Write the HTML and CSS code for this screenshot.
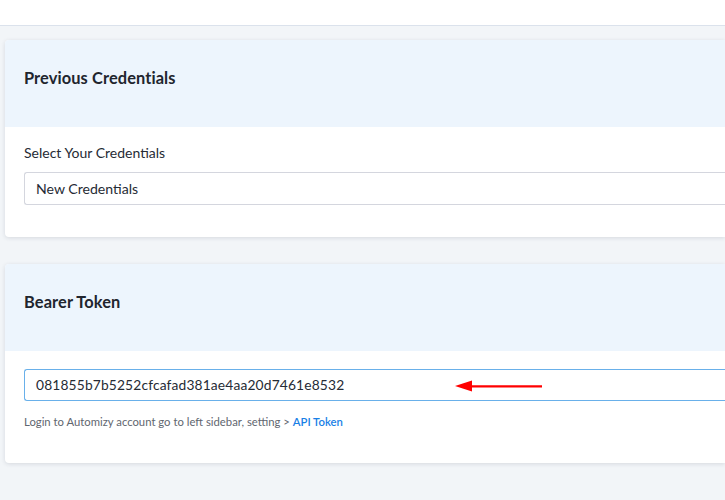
FILE: index.html
```html
<!DOCTYPE html>
<html>
<head>
<meta charset="utf-8">
<link rel="stylesheet" href="styles.css">
</head>
<body>
<div class="topbar"></div>
<main class="content">
  <section class="card">
    <div class="card-head"><h2>Previous Credentials</h2></div>
    <div class="card-body">
      <label class="label">Select Your Credentials</label>
      <div class="input">New Credentials</div>
    </div>
  </section>
  <section class="card card-token">
    <div class="card-head"><h2>Bearer Token</h2></div>
    <div class="card-body">
      <div class="input input-focus">081855b7b5252cfcafad381ae4aa20d7461e8532
        <svg class="arrow" width="90" height="14" viewBox="0 0 90 14"><path d="M16 6.2 L87 6.2 L87 8.6 L16 8.6 Z" fill="#f00"/><path d="M0 7 L17 1.5 L17 12.5 Z" fill="#f00"/></svg>
      </div>
      <p class="help">Login to Automizy account go to left sidebar, setting &gt; <a href="#">API Token</a></p>
    </div>
  </section>
</main>
</body>
</html>
```

FILE: styles.css
```css
* { box-sizing: border-box; }
html, body { margin: 0; padding: 0; }
body {
  width: 725px;
  height: 500px;
  overflow: hidden;
  background: #f2f5f8;
  font-family: Lato, "Open Sans", sans-serif;
  color: #1f2430;
}
.topbar {
  height: 26px;
  background: #fff;
  border-bottom: 1px solid #dbe2ec;
}
.content {
  padding: 14px 0 0 5px;
  display: flex;
  flex-direction: column;
  gap: 27px;
}
.card {
  background: #fff;
  border-radius: 4px 0 0 4px;
  box-shadow: 0 1px 4px rgba(40, 50, 70, 0.14);
  overflow: hidden;
}
.card-head {
  background: #edf5fd;
  height: 87px;
  display: flex;
  align-items: center;
  padding: 0 19px;
}
.card-head h2 {
  margin: 0 0 13px;
  font-size: 16.4px;
  font-weight: 700;
  letter-spacing: 0.1px;
  color: #21252e;
}
.card-body {
  padding: 17px 0 32px 19px;
}
.label {
  display: block;
  font-size: 14px;
  line-height: 18px;
  color: #262b35;
  margin-bottom: 10px;
}
.input {
  position: relative;
  height: 33px;
  border: 1px solid #d4d6de;
  border-right: none;
  border-radius: 3px 0 0 3px;
  padding: 0 11px;
  font-size: 14.1px;
  line-height: 31px;
  color: #262b35;
}
.card-token .card-body {
  padding: 18px 0 34px 19px;
}
.input-focus {
  border-color: #69b0ea;
  height: 32px;
  line-height: 30px;
  font-size: 13.8px;
  letter-spacing: 0.15px;
}
.arrow {
  position: absolute;
  left: 430px;
  top: 9px;
}
.help {
  margin: 14px 0 0;
  font-size: 11.3px;
  line-height: 14px;
  color: #61666f;
}
.help a {
  color: #1a7fe6;
  font-weight: 600;
  text-decoration: none;
}
```
